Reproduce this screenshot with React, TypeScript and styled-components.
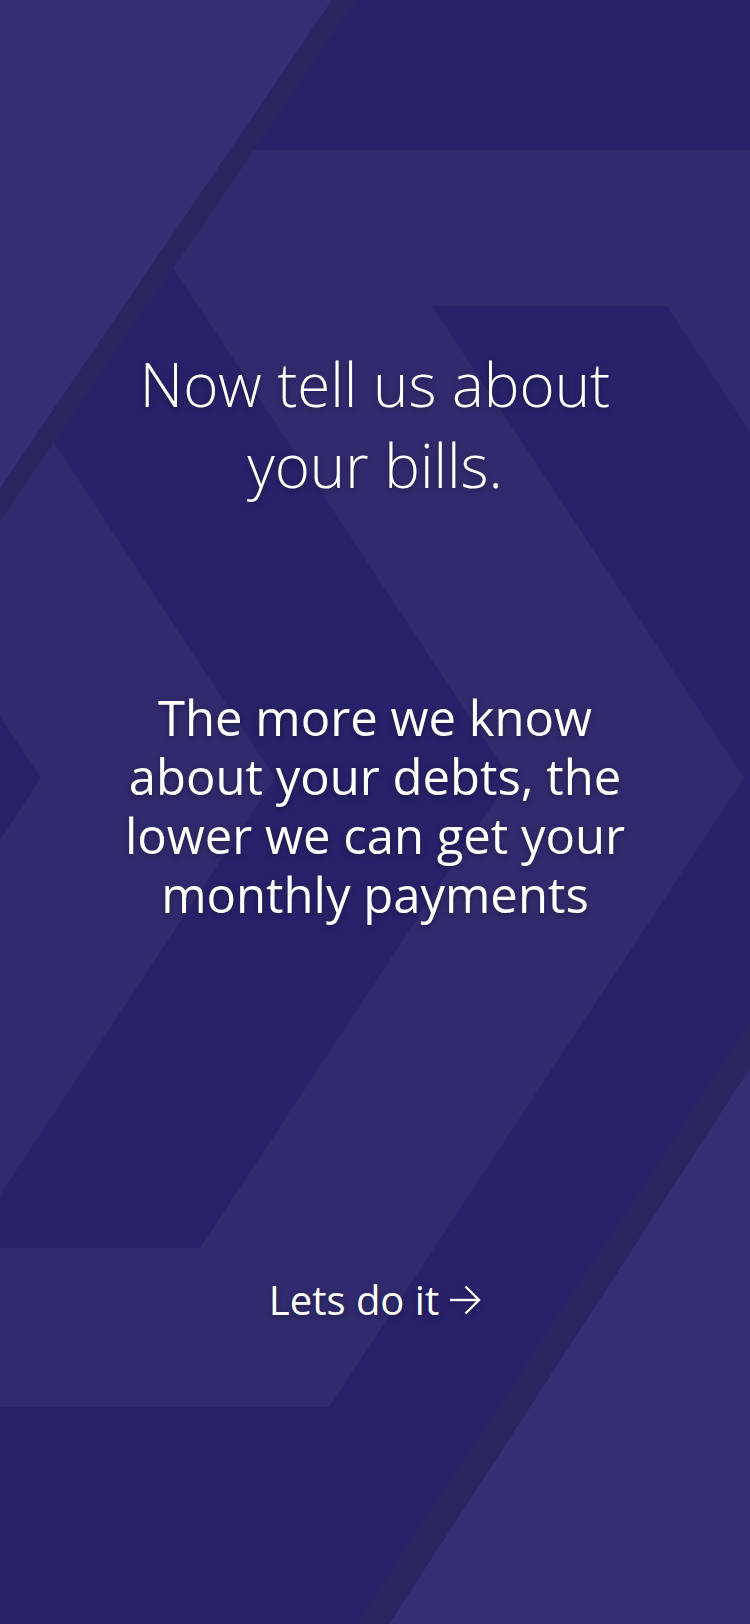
import styled, { createGlobalStyle } from "styled-components";

const GlobalStyle = createGlobalStyle`
    html, body {
        margin: 0;
        padding: 0;
        background: #312b6e;
    }
    * {
        box-sizing: border-box;
    }
`;

const Screen = styled.div`
    position: relative;
    width: 750px;
    min-height: 1624px;
    overflow: hidden;
    background-color: #312b6e;
    font-family: "Open Sans", "Noto Sans", sans-serif;
    color: #ffffff;
`;

// chevron pattern sits behind everything
const Backdrop = styled.svg`
    position: absolute;
    inset: 0;
    width: 100%;
    height: 100%;
    z-index: 0;
`;

const Content = styled.main`
    position: relative;
    z-index: 1;
    display: flex;
    flex-direction: column;
    align-items: center;
    padding-top: 344px;
    text-align: center;
    text-shadow: 0 2px 6px rgba(0, 0, 0, 0.35);
`;

const Title = styled.h1`
    margin: 0;
    font-size: 60px;
    line-height: 81px;
    font-weight: 300;
    letter-spacing: 0;
`;

const Lead = styled.p`
    margin: 182px 0 0;
    font-size: 49px;
    line-height: 59px;
    font-weight: 400;
`;

const CtaButton = styled.button`
    display: flex;
    align-items: center;
    gap: 10px;
    margin-top: 352px;
    padding: 0;
    border: none;
    background: none;
    color: #ffffff;
    font-family: "Open Sans", "Noto Sans", sans-serif;
    font-size: 40px;
    line-height: 48px;
    font-weight: 400;
    text-shadow: 0 2px 6px rgba(0, 0, 0, 0.35);
    cursor: pointer;

    svg {
        filter: drop-shadow(0 2px 3px rgba(0, 0, 0, 0.3));
    }
`;

const colors = {
    medium: "#312b6e",
    dark: "#28226a",
    light: "#352e75",
    stripe: "#2a2660",
};

function ChevronBackdrop() {
    return (
        <Backdrop viewBox="0 0 750 1624" preserveAspectRatio="none">
            <rect x="0" y="0" width="750" height="1624" fill={colors.medium} />
            {/* top band */}
            <rect x="0" y="0" width="750" height="150" fill={colors.dark} />
            {/* left tip */}
            <polygon points="-20,687 41,778 -20,870" fill={colors.dark} />
            {/* middle chevron */}
            <polygon points="-238,0 -4,0 510,778 200,1248 -35,1248 275,778" fill={colors.dark} />
            {/* right chevron */}
            <polygon points="432,306 667,306 978,778 420,1624 186,1624 744,778" fill={colors.dark} />
            {/* bottom band */}
            <rect x="0" y="1407" width="750" height="217" fill={colors.dark} />
            {/* top-left corner */}
            <polygon points="332,0 357,0 0,521 0,488" fill={colors.stripe} />
            <polygon points="0,0 332,0 0,488" fill={colors.light} />
            {/* bottom-right corner */}
            <polygon points="750,1022 750,1068 389,1624 356,1624" fill={colors.stripe} />
            <polygon points="750,1068 750,1624 389,1624" fill={colors.light} />
        </Backdrop>
    );
}

function ArrowRight() {
    return (
        <svg width="32" height="30" viewBox="0 0 32 30" fill="none">
            <path d="M1 15H30" stroke="#ffffff" strokeWidth="2.4" />
            <path d="M16.5 1.5L30 15L16.5 28.5" stroke="#ffffff" strokeWidth="2.4" />
        </svg>
    );
}

export default function App() {
    return (
        <>
            <GlobalStyle />
            <Screen>
                <ChevronBackdrop />
                <Content>
                    <Title>
                        Now tell us about
                        <br />
                        your bills.
                    </Title>
                    <Lead>
                        The more we know
                        <br />
                        about your debts, the
                        <br />
                        lower we can get your
                        <br />
                        monthly payments
                    </Lead>
                    <CtaButton type="button">
                        Lets do it
                        <ArrowRight />
                    </CtaButton>
                </Content>
            </Screen>
        </>
    );
}
